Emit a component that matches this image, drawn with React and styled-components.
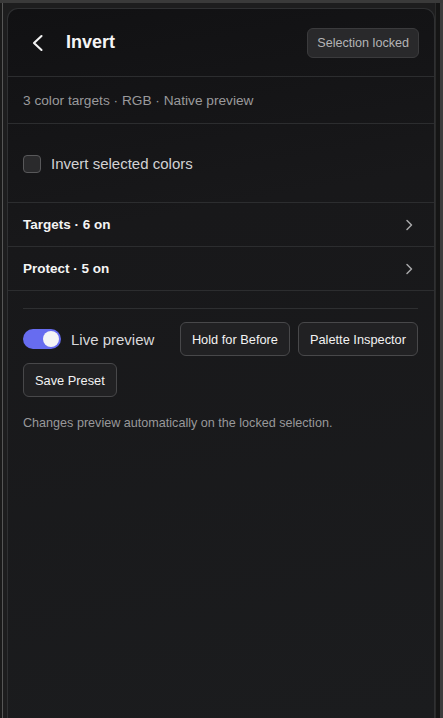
import React, { useState } from 'react';
import styled, { createGlobalStyle } from 'styled-components';

const Global = createGlobalStyle`
    html, body {
        margin: 0;
        padding: 0;
        background: #1c1c1d;
        font-family: "Liberation Sans", Arial, sans-serif;
        -webkit-font-smoothing: antialiased;
    }
    * { box-sizing: border-box; }
`

const Shell = styled.div`
    display: flex;
    height: 718px;
    overflow: hidden;
    border-top: 3px solid #3a3a3a;
    background: #1d1d1e;
`

const LeftRail = styled.div`
    width: 7px;
    flex-shrink: 0;
    border-left: 2px solid #1a1a1a;
    box-shadow: inset 1px 0 0 #565656;
`

const RightRail = styled.div`
    width: 8px;
    flex-shrink: 0;
    background: #151515;
    border-right: 3px solid #3c3c3c;
    border-left: 1px solid #2a2a2a;
`

const Panel = styled.section`
    flex: 1;
    margin-top: 5px;
    border: 1px solid #2f3032;
    border-bottom: none;
    border-radius: 11px 11px 0 0;
    background: linear-gradient(170deg, #111113 0%, #18181a 30%, #1b1c1e 100%);
    display: flex;
    flex-direction: column;
    color: #eee;
`

const Header = styled.header`
    height: 68px;
    display: flex;
    align-items: center;
    padding: 0 15px 0 24px;
    border-bottom: 1px solid #2c2d2f;
`

const BackButton = styled.button`
    background: none;
    border: none;
    padding: 0;
    width: 12px;
    height: 18px;
    display: flex;
    color: #f2f2f2;
    cursor: pointer;
`

const Title = styled.h1`
    margin: 0 0 0 22px;
    font-size: 18px;
    font-weight: 700;
    color: #f5f5f5;
    flex: 1;
`

const Pill = styled.span`
    height: 30px;
    padding: 0 9px;
    display: flex;
    align-items: center;
    border-radius: 6px;
    background: #29292b;
    border: 1px solid #3b3b3d;
    color: #b4b4b6;
    font-size: 12.6px;
`

const Meta = styled.div`
    height: 47px;
    display: flex;
    align-items: center;
    padding: 0 15px;
    color: #9a9a9c;
    font-size: 13.7px;
    border-bottom: 1px solid #2c2d2f;
`

const CheckSection = styled.label`
    height: 79px;
    display: flex;
    align-items: center;
    gap: 10px;
    padding: 1px 15px 0;
    border-bottom: 1px solid #2c2d2f;
    color: #d2d2d4;
    font-size: 15px;
    cursor: pointer;
`

const Box = styled.span`
    width: 18px;
    height: 18px;
    border-radius: 4px;
    border: 1px solid #58585a;
    background: ${p => (p.$checked ? '#6366f1' : '#2a2a2c')};
`

const Row = styled.div`
    height: 44px;
    display: flex;
    align-items: center;
    justify-content: space-between;
    padding: 0 21px 0 15px;
    border-bottom: 1px solid #2c2d2f;
    font-size: 13.5px;
    font-weight: 700;
    color: #f4f4f4;
    cursor: pointer;
`

const Controls = styled.div`
    padding: 17px 16px 0 15px;
`

const Rule = styled.hr`
    margin: 0 0 13px;
    border: none;
    border-top: 1px solid #2e2f31;
`

const ButtonWrap = styled.div`
    display: flex;
    flex-wrap: wrap;
    align-items: center;
    gap: 7px 8px;
`

const ToggleLabel = styled.label`
    display: flex;
    align-items: center;
    gap: 10px;
    margin-right: auto;
    font-size: 15px;
    color: #d8d8da;
    cursor: pointer;
`

const Track = styled.span`
    width: 38px;
    height: 20px;
    border-radius: 10px;
    background: ${p => (p.$on ? '#676cf0' : '#3a3a3c')};
    display: flex;
    align-items: center;
    padding: 2px;
    justify-content: ${p => (p.$on ? 'flex-end' : 'flex-start')};
`

const Knob = styled.span`
    width: 16px;
    height: 16px;
    border-radius: 50%;
    background: #f4f4f6;
`

const Button = styled.button`
    height: 34px;
    padding: 0 11px;
    border-radius: 6px;
    background: #212123;
    border: 1px solid #48484a;
    color: #f2f2f2;
    font-family: inherit;
    font-size: 12.8px;
    cursor: pointer;
`

const Note = styled.p`
    margin: 19px 0 0;
    font-size: 12.6px;
    color: #98989a;
`

const ChevronWrap = styled.span`
    color: #a8a8aa;
    display: flex;
`

const BackIcon = () => (
    <svg width="12" height="18" viewBox="0 0 12 18" fill="none" stroke="currentColor"
        strokeWidth="2.1" strokeLinecap="round" strokeLinejoin="round">
        <path d="M9.5 2 2 9l7.5 7" />
    </svg>
)

const NextIcon = () => (
    <svg width="8" height="12" viewBox="0 0 8 12" fill="none" stroke="currentColor"
        strokeWidth="1.5" strokeLinecap="round" strokeLinejoin="round">
        <path d="m2 1.5 4.5 4.5L2 10.5" />
    </svg>
)

export default function App() {
    const [invert, setInvert] = useState(false)
    const [live, setLive] = useState(true)

    return (
        <>
            <Global />
            <Shell>
                <LeftRail />
                <Panel>
                    <Header>
                        <BackButton aria-label="Back"><BackIcon /></BackButton>
                        <Title>Invert</Title>
                        <Pill>Selection locked</Pill>
                    </Header>
                    <Meta>3 color targets · RGB · Native preview</Meta>
                    <CheckSection onClick={() => setInvert(!invert)}>
                        <Box $checked={invert} />
                        Invert selected colors
                    </CheckSection>
                    <Row>
                        Targets · 6 on
                        <ChevronWrap><NextIcon /></ChevronWrap>
                    </Row>
                    <Row>
                        Protect · 5 on
                        <ChevronWrap><NextIcon /></ChevronWrap>
                    </Row>
                    <Controls>
                        <Rule />
                        <ButtonWrap>
                            <ToggleLabel onClick={() => setLive(!live)}>
                                <Track $on={live}><Knob /></Track>
                                Live preview
                            </ToggleLabel>
                            <Button>Hold for Before</Button>
                            <Button>Palette Inspector</Button>
                            <Button>Save Preset</Button>
                        </ButtonWrap>
                        <Note>Changes preview automatically on the locked selection.</Note>
                    </Controls>
                </Panel>
                <RightRail />
            </Shell>
        </>
    )
}
